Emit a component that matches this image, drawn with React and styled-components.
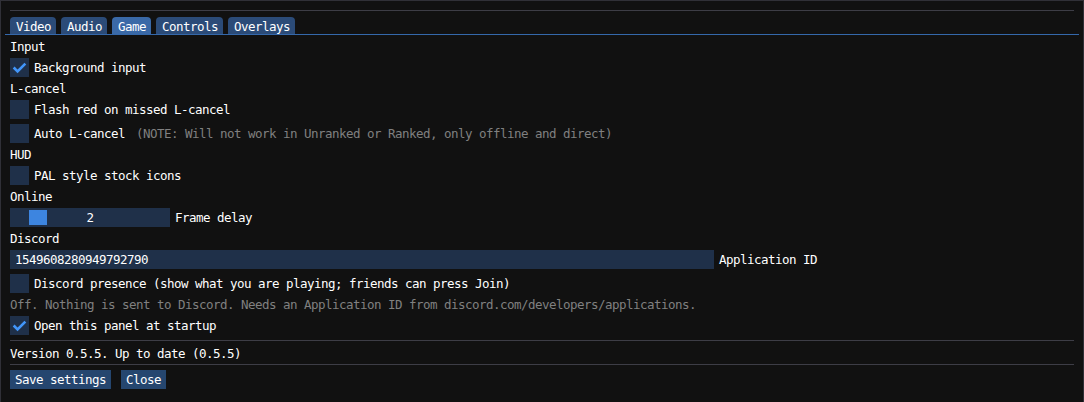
import React from "react";
import styled, { createGlobalStyle } from "styled-components";

const GlobalStyle = createGlobalStyle`
  html, body {
    margin: 0;
    padding: 0;
    background: #111111;
  }
  body {
    font-family: "DejaVu Sans Mono", "Liberation Mono", monospace;
    font-size: 12.5px;
    letter-spacing: -0.526px;
    color: #ffffff;
    -webkit-font-smoothing: none;
  }
`;

const Window = styled.div`
  width: 1084px;
  height: 402px;
  box-sizing: border-box;
  border: 1px solid #303037;
  border-bottom: none;
  padding: 9px 9px 0;
  background: #111111;
  overflow: hidden;
`;

const Separator = styled.div`
  height: 1px;
  background: #3d3d46;
  margin-top: ${(p) => p.$top || 0}px;
`;

const TabBar = styled.div`
  display: flex;
  gap: 5px;
  margin: 6px -5px 0;
  padding: 0 5px;
  border-bottom: 1px solid #3468ab;
`;

const Tab = styled.div`
  height: 17px;
  box-sizing: border-box;
  padding: 2px 5px 0 6px;
  line-height: 15px;
  border-radius: 4px 4px 0 0;
  background: ${(p) => (p.$active ? "#3a69a7" : "#2b4b78")};
  white-space: pre;
`;

const Body = styled.div`
  display: flex;
  flex-direction: column;
  gap: 4px;
  margin-top: 5px;
`;

const Label = styled.div`
  height: 14px;
  line-height: 14px;
  white-space: pre;
  margin-top: ${(p) => p.$top || 0}px;
  color: ${(p) => (p.$dim ? "#808080" : "#ffffff")};
`;

const Row = styled.div`
  display: flex;
  align-items: flex-start;
  height: 20px;
`;

const Frame = styled.div`
  height: 19px;
  background: #1f3049;
  box-sizing: border-box;
`;

const CheckBox = styled(Frame)`
  width: 19px;
  flex: none;
`;

const RowText = styled.span`
  line-height: 19px;
  margin-left: ${(p) => p.$gap ?? 5}px;
  white-space: pre;
  color: ${(p) => (p.$dim ? "#808080" : "#ffffff")};
`;

const SliderFrame = styled(Frame)`
  position: relative;
  width: 160px;
  text-align: center;
  line-height: 19px;
`;

const SliderGrab = styled.div`
  position: absolute;
  top: 2px;
  bottom: 2px;
  width: 18px;
  background: #3d85e0;
`;

const SliderValue = styled.span`
  position: relative;
`;

const InputFrame = styled(Frame)`
  width: 704px;
  padding-left: 5px;
  line-height: 19px;
`;

const Footer = styled.div`
  display: flex;
  flex-direction: column;
  margin-top: 4px;
`;

const Buttons = styled.div`
  display: flex;
  gap: 10px;
  margin-top: 5px;
`;

const Button = styled.div`
  height: 19px;
  line-height: 19px;
  padding: 0 5px;
  background: #25466f;
  white-space: pre;
`;

function Check({ checked }) {
  return (
    <CheckBox>
      {checked && (
        <svg width="19" height="19" viewBox="0 0 19 19">
          <polyline
            points="3.65,9.5 7.55,13.4 15.35,5.6"
            fill="none"
            stroke="#4296fa"
            strokeWidth="2.6"
          />
        </svg>
      )}
    </CheckBox>
  );
}

function CheckRow({ checked, label, note }) {
  return (
    <Row>
      <Check checked={checked} />
      <RowText>{label}</RowText>
      {note && (
        <RowText $dim $gap={11}>
          {note}
        </RowText>
      )}
    </Row>
  );
}

const tabs = ["Video", "Audio", "Game", "Controls", "Overlays"];

export default function App() {
  const frameDelay = 2;
  const maxDelay = 16;
  const grabLeft = 2 + (frameDelay / maxDelay) * (160 - 4 - 18);

  return (
    <>
      <GlobalStyle />
      <Window>
        <Separator />
        <TabBar>
          {tabs.map((t) => (
            <Tab key={t} $active={t === "Game"}>
              {t}
            </Tab>
          ))}
        </TabBar>
        <Body>
          <Label>Input</Label>
          <CheckRow checked label="Background input" />
          <Label>L-cancel</Label>
          <CheckRow label="Flash red on missed L-cancel" />
          <CheckRow
            label="Auto L-cancel"
            note="(NOTE: Will not work in Unranked or Ranked, only offline and direct)"
          />
          <Label>HUD</Label>
          <CheckRow label="PAL style stock icons" />
          <Label>Online</Label>
          <Row>
            <SliderFrame>
              <SliderGrab style={{ left: grabLeft }} />
              <SliderValue>{frameDelay}</SliderValue>
            </SliderFrame>
            <RowText>Frame delay</RowText>
          </Row>
          <Label>Discord</Label>
          <Row>
            <InputFrame>1549608280949792790</InputFrame>
            <RowText>Application ID</RowText>
          </Row>
          <CheckRow label="Discord presence (show what you are playing; friends can press Join)" />
          <Label $dim>
            Off. Nothing is sent to Discord. Needs an Application ID from
            discord.com/developers/applications.
          </Label>
          <CheckRow checked label="Open this panel at startup" />
        </Body>
        <Footer>
          <Separator />
          <Label $top={6}>Version 0.5.5. Up to date (0.5.5)</Label>
          <Separator $top={3} />
          <Buttons>
            <Button>Save settings</Button>
            <Button>Close</Button>
          </Buttons>
        </Footer>
      </Window>
    </>
  );
}
